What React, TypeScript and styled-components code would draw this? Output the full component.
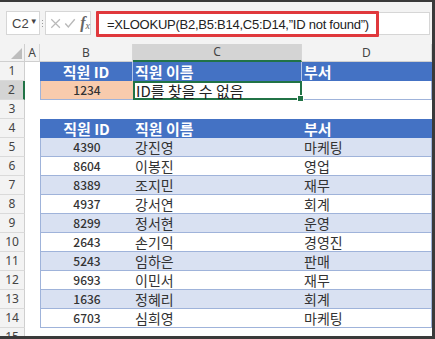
import React from "react";
import styled, { createGlobalStyle } from "styled-components";

const GlobalStyle = createGlobalStyle`
  * { box-sizing: border-box; }
  body {
    margin: 0;
    background: #fff;
    font-family: "Noto Sans CJK KR", "Noto Sans", sans-serif;
  }
`;

const Frame = styled.div`
  width: 435px;
  height: 339px;
  overflow: hidden;
  background: #fff;
  border-top: 2px solid #3a3a3a;
  border-right: 3px solid #3a3a3a;
  border-bottom: 3px solid #3a3a3a;
  display: flex;
  flex-direction: column;
`;

const FormulaBar = styled.div`
  height: 42px;
  flex: none;
  background: #f3f3f3;
  display: flex;
  align-items: flex-start;
  padding: 9px 2px 0 6px;
`;

const Box = styled.div`
  height: 24px;
  background: #fff;
  border: 1px solid #d6d6d6;
  display: flex;
  align-items: center;
`;

const NameBox = styled(Box)`
  width: 34px;
  padding-left: 5px;
  font-family: "Liberation Sans", Arial, sans-serif;
  font-size: 13px;
  color: #444;
  span {
    font-size: 8px;
    margin-left: 1px;
    margin-top: -4px;
  }
`;

const Dots = styled.div`
  width: 5px;
  height: 24px;
  display: flex;
  flex-direction: column;
  align-items: center;
  justify-content: center;
  gap: 2px;
  i {
    width: 1px;
    height: 1px;
    background: #999;
  }
`;

const ButtonBox = styled(Box)`
  width: 46px;
  gap: 3px;
  padding-left: 4px;
`;

const Fx = styled.span`
  font-family: "Liberation Serif", serif;
  font-style: italic;
  font-weight: 700;
  font-size: 16px;
  line-height: 1;
  color: #666;
  margin-left: 1px;
  sub {
    font-size: 10px;
    font-weight: 400;
    vertical-align: -1px;
  }
`;

const FormulaInput = styled(Box)`
  flex: 1;
  margin-left: 5px;
  height: 23px;
  margin-top: 1px;
  align-items: stretch;
  border-left: none;
`;

const Highlight = styled.span`
  display: flex;
  align-items: center;
  height: 26px;
  margin-top: -2px;
  padding: 0 7px 0 8px;
  border: 3px solid #e0383c;
  border-radius: 1px;
  font-family: "Liberation Sans", Arial, sans-serif;
  font-size: 13px;
  letter-spacing: -0.25px;
  color: #222;
  white-space: nowrap;
`;

const Sheet = styled.div`
  display: grid;
  grid-template-columns: 25px 15px 93px 169px 130px;
  grid-template-rows: 18px;
  grid-auto-rows: 19px;
  line-height: 1;
`;

const Corner = styled.div`
  background: #f3f3f3;
  border-right: 1px solid #cfcfcf;
  border-bottom: 1px solid #cfcfcf;
  position: relative;
  &::after {
    content: "";
    position: absolute;
    right: 2px;
    bottom: 2px;
    border-left: 11px solid transparent;
    border-bottom: 11px solid #bdbdbd;
  }
`;

const ColHead = styled.div<{ $selected?: boolean }>`
  background: ${(p) => (p.$selected ? "#d4d4d4" : "#f3f3f3")};
  border-right: 1px solid #d6d6d6;
  border-bottom: ${(p) => (p.$selected ? "2px solid #217346" : "1px solid #cfcfcf")};
  display: flex;
  align-items: center;
  justify-content: center;
  font-family: "Noto Sans", sans-serif;
  font-size: 12px;
  color: #444;
`;

const RowHead = styled.div<{ $selected?: boolean }>`
  background: ${(p) => (p.$selected ? "#d4d4d4" : "#f3f3f3")};
  border-bottom: 1px solid #dadada;
  border-right: ${(p) => (p.$selected ? "2px solid #217346" : "1px solid #cfcfcf")};
  display: flex;
  align-items: center;
  justify-content: center;
  font-family: "Noto Sans", sans-serif;
  font-size: 12px;
  color: #444;
`;

const Blank = styled.div`
  background: #fff;
`;

type Align = "center" | "left";

const HeadCell = styled.div<{ $align: Align; $divider?: boolean }>`
  background: #4472c4;
  color: #fff;
  font-weight: 700;
  font-size: 15px;
  display: flex;
  align-items: center;
  justify-content: ${(p) => (p.$align === "center" ? "center" : "flex-start")};
  padding-left: ${(p) => (p.$align === "center" ? "0" : "2px")};
  border-right: ${(p) => (p.$divider ? "1px solid #b4c6e7" : "none")};
  white-space: nowrap;
`;

const DataCell = styled.div<{
  $align: Align;
  $band?: boolean;
  $bg?: string;
  $num?: boolean;
  $edge?: "left" | "right";
}>`
  background: ${(p) => p.$bg || (p.$band ? "#d9e1f2" : "#fff")};
  border-bottom: 1px solid #9fb3da;
  border-left: ${(p) => (p.$edge === "left" ? "1px solid #9fb3da" : "none")};
  border-right: ${(p) => (p.$edge === "right" ? "1px solid #9fb3da" : "none")};
  display: flex;
  align-items: center;
  justify-content: ${(p) => (p.$align === "center" ? "center" : "flex-start")};
  padding-left: ${(p) => (p.$align === "center" ? "0" : "2px")};
  font-size: ${(p) => (p.$num ? "12px" : "14px")};
  font-weight: ${(p) => (p.$num ? 500 : 400)};
  color: #333;
  white-space: nowrap;
`;

const ActiveCell = styled.div`
  position: relative;
  background: #fff;
  border: 2px solid #217346;
  display: flex;
  align-items: center;
  padding-left: 1px;
  font-size: 15px;
  color: #222;
  white-space: nowrap;
  &::after {
    content: "";
    position: absolute;
    right: -4px;
    bottom: -4px;
    width: 5px;
    height: 5px;
    background: #217346;
    border: 1px solid #fff;
  }
`;

const people = [
  ["4390", "강진영", "마케팅"],
  ["8604", "이봉진", "영업"],
  ["8389", "조지민", "재무"],
  ["4937", "강서연", "회계"],
  ["8299", "정서현", "운영"],
  ["2643", "손기익", "경영진"],
  ["5243", "임하은", "판매"],
  ["9693", "이민서", "재무"],
  ["1636", "정혜리", "회계"],
  ["6703", "심희영", "마케팅"],
];

const CancelIcon = () => (
  <svg width="13" height="13" viewBox="0 0 13 13">
    <path d="M1.5 1.5 L11.5 11.5 M11.5 1.5 L1.5 11.5" stroke="#b9b9b9" strokeWidth="1.4" fill="none" />
  </svg>
);

const CheckIcon = () => (
  <svg width="14" height="13" viewBox="0 0 14 13">
    <path d="M1.5 6.5 L5 10.5 L12.5 1.5" stroke="#b9b9b9" strokeWidth="1.6" fill="none" />
  </svg>
);

export default function App() {
  return (
    <Frame>
      <GlobalStyle />
      <FormulaBar>
        <NameBox>
          C2<span>▼</span>
        </NameBox>
        <Dots>
          <i />
          <i />
          <i />
        </Dots>
        <ButtonBox>
          <CancelIcon />
          <CheckIcon />
          <Fx>
            f<sub>x</sub>
          </Fx>
        </ButtonBox>
        <FormulaInput>
          <Highlight>=XLOOKUP(B2,B5:B14,C5:D14,”ID not found”)</Highlight>
        </FormulaInput>
      </FormulaBar>

      <Sheet>
        <Corner />
        <ColHead>A</ColHead>
        <ColHead>B</ColHead>
        <ColHead $selected>C</ColHead>
        <ColHead>D</ColHead>

        <RowHead>1</RowHead>
        <Blank />
        <HeadCell $align="center" $divider>직원 ID</HeadCell>
        <HeadCell $align="left" $divider>직원 이름</HeadCell>
        <HeadCell $align="left">부서</HeadCell>

        <RowHead $selected>2</RowHead>
        <Blank />
        <DataCell $align="center" $num $bg="#f8cbad" $edge="left">
          1234
        </DataCell>
        <ActiveCell>ID를 찾을 수 없음</ActiveCell>
        <DataCell $align="left" $edge="right" />

        <RowHead>3</RowHead>
        <Blank />
        <Blank />
        <Blank />
        <Blank />

        <RowHead>4</RowHead>
        <Blank />
        <HeadCell $align="center">직원 ID</HeadCell>
        <HeadCell $align="left">직원 이름</HeadCell>
        <HeadCell $align="left">부서</HeadCell>

        {people.map(([id, name, dept], i) => (
          <React.Fragment key={id + name}>
            <RowHead>{i + 5}</RowHead>
            <Blank />
            <DataCell $align="center" $num $band={i % 2 === 0} $edge="left">
              {id}
            </DataCell>
            <DataCell $align="left" $band={i % 2 === 0}>
              {name}
            </DataCell>
            <DataCell $align="left" $band={i % 2 === 0} $edge="right">
              {dept}
            </DataCell>
          </React.Fragment>
        ))}

        <RowHead>15</RowHead>
        <Blank />
        <Blank />
        <Blank />
        <Blank />
      </Sheet>
    </Frame>
  );
}
